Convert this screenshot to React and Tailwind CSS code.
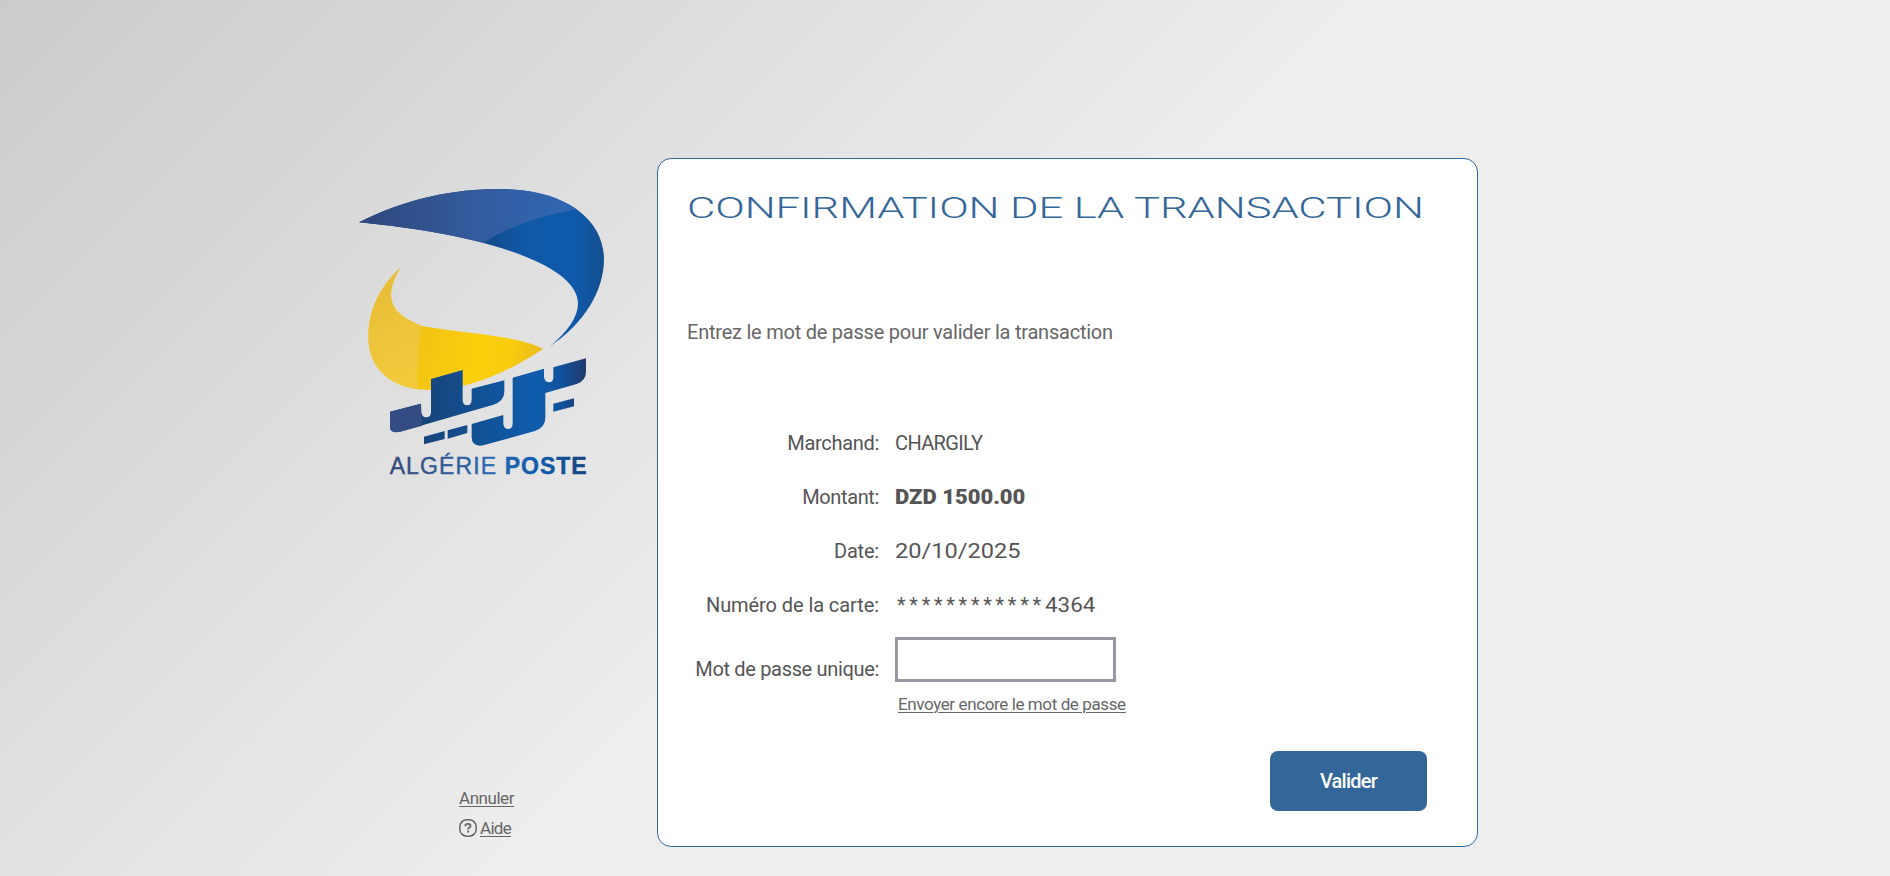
function Logo() {
  return (
    <svg viewBox="0 0 840 960" className="block h-[320px] w-[280px]" role="img">
      <defs>
        <linearGradient id="swoosh" gradientUnits="userSpaceOnUse" x1="432" y1="0" x2="792" y2="0">
          <stop offset="0" stopColor="#124a87" />
          <stop offset="0.35" stopColor="#0f59a8" />
          <stop offset="0.75" stopColor="#0f5aaa" />
          <stop offset="1" stopColor="#134f90" />
        </linearGradient>
        <linearGradient id="swooshLight" gradientUnits="userSpaceOnUse" x1="57" y1="0" x2="712" y2="0">
          <stop offset="0" stopColor="#2f477c" />
          <stop offset="0.5" stopColor="#335a9b" />
          <stop offset="1" stopColor="#2f67b4" />
        </linearGradient>
        <linearGradient id="yellow" gradientUnits="userSpaceOnUse" x1="240" y1="500" x2="600" y2="600">
          <stop offset="0" stopColor="#f2c314" />
          <stop offset="0.5" stopColor="#fbd00b" />
          <stop offset="0.72" stopColor="#f9cd0e" />
          <stop offset="1" stopColor="#e9b81e" />
        </linearGradient>
        <linearGradient id="yellowLight" gradientUnits="userSpaceOnUse" x1="90" y1="300" x2="240" y2="600">
          <stop offset="0" stopColor="#e7bb35" />
          <stop offset="1" stopColor="#f2ca3c" />
        </linearGradient>
        <linearGradient id="script" gradientUnits="userSpaceOnUse" x1="245" y1="0" x2="738" y2="0">
          <stop offset="0" stopColor="#184479" />
          <stop offset="0.5" stopColor="#0f569f" />
          <stop offset="0.7" stopColor="#0f5cad" />
          <stop offset="0.85" stopColor="#11529c" />
          <stop offset="1" stopColor="#203a6c" />
        </linearGradient>
        <linearGradient id="wordmark" gradientUnits="userSpaceOnUse" x1="150" y1="0" x2="740" y2="0">
          <stop offset="0" stopColor="#33487a" />
          <stop offset="0.5" stopColor="#2b68b0" />
          <stop offset="0.75" stopColor="#0f5cad" />
          <stop offset="1" stopColor="#17457e" />
        </linearGradient>
        <clipPath id="swooshClip">
          <path d="M57 157C200 85 340 57 480 57C680 57 792 150 792 268C792 360 735 460 628 530C685 485 714 440 714 400C714 290 455 195 57 157Z" />
        </clipPath>
        <clipPath id="yellowClip">
          <path d="M182 292C120 350 85 420 85 500C85 600 160 660 272 660C380 660 500 610 609 537C530 495 400 495 245 468C190 445 153 420 153 375C153 345 168 315 182 292Z" />
        </clipPath>
      </defs>
      <g clipPath="url(#swooshClip)">
        <path d="M0 0H840V560H0Z" fill="url(#swoosh)" />
        <path d="M0 0H840V100L712 118Q550 145 432 217L400 260H0Z" fill="url(#swooshLight)" />
      </g>
      <g clipPath="url(#yellowClip)">
        <path d="M0 240H700V700H0Z" fill="url(#yellow)" />
        <path d="M0 240H245V468Q228 560 235 700H0Z" fill="url(#yellowLight)" />
      </g>
      <g transform="translate(0 480)" fill="url(#script)">
        <path d="M150 245L243 221V245Q246 262 258 262Q273 262 273 245V147L368 120V210Q368 226 382 226Q395 226 395 208V176L493 151V185Q493 213 460 224L180 305Q150 311 150 292Z" />
        <path d="M150 245L243 221L246 287L180 305Q150 311 150 292Z" fill="#334c84" />
        <path d="M395 282L490 255V282Q492 297 505 297Q518 297 518 280V143L612 116V140Q614 157 628 157Q640 157 640 142V112L738 85V125Q738 152 710 162L616 189V265Q616 292 585 303L430 346Q395 352 395 322Z" />
        <path d="M252 320L314 303V327L252 343ZM323 301L382 285V309L323 326ZM640 221L702 205V229L640 245Z" />
      </g>
      <g fill="url(#wordmark)" stroke="url(#wordmark)" strokeWidth="1.2" fontSize="69" fontFamily="'Liberation Sans', Arial, sans-serif">
        <text x="149" y="911" textLength="319">ALGÉRIE</text>
        <text x="494" y="911" textLength="246" fontWeight="700">POSTE</text>
      </g>
    </svg>
  );
}

function HelpIcon() {
  return (
    <svg viewBox="0 0 18 18" className="h-[18px] w-[18px]" fill="none" stroke="#666">
      <rect x="0.8" y="0.8" width="16.4" height="16.4" rx="7" strokeWidth="1.5" />
      <path d="M6.4 7.2V6.7Q6.4 4.9 8.9 4.9Q11.5 4.9 11.5 6.9Q11.5 8.1 10.2 8.6Q9.1 9 9.1 10.4" strokeWidth="1.9" />
      <path d="M8.1 12.6H10.1" strokeWidth="1.9" />
    </svg>
  );
}

function Row({ label, labelClass, children }) {
  return (
    <div className="flex h-[54px] items-center">
      <div className="w-[193px] text-right">
        <span className={labelClass}>{label}</span>
      </div>
      <div className="ml-[16px] flex">{children}</div>
    </div>
  );
}

const linkClass = 'text-[17px] leading-5 text-[#666] underline decoration-1 underline-offset-[1.5px]';

export default function App() {
  return (
    <div className="h-[876px] overflow-hidden bg-[linear-gradient(135deg,#cbcbcb_0%,#eeeeee_50%)] font-['Roboto',sans-serif] text-[20px] leading-6 text-[#555]">
      <main className="flex pt-[158px]">
        <aside className="ml-[340px] flex h-[689px] w-[317px] flex-col pt-[12px]">
          <Logo />
          <nav className="mt-[298px] ml-[119px] flex flex-col items-start gap-[10px]">
            <a href="#annuler" className={linkClass + ' tracking-[-0.45px]'}>Annuler</a>
            <div className="flex items-center gap-[3px]">
              <HelpIcon />
              <a href="#aide" className={linkClass + ' tracking-[-0.7px]'}>Aide</a>
            </div>
          </nav>
        </aside>

        <section className="h-[689px] w-[821px] rounded-[14px] border border-[#336699] bg-white pl-[28px]">
          <h1 className="mt-[31px] ml-[1px] h-9 w-[509px] origin-left scale-x-[1.453] text-[30px] leading-9 font-[350] whitespace-nowrap text-[#336699] tracking-[-0.05px]">
            CONFIRMATION DE LA TRANSACTION
          </h1>
          <p className="mt-[94px] ml-[1px] tracking-[-0.23px] text-[#666]">
            Entrez le mot de passe pour valider la transaction
          </p>

          <div className="mt-[72px]">
            <Row label="Marchand:" labelClass="tracking-[-0.3px]">
              <span className="tracking-[-0.63px]">CHARGILY</span>
            </Row>
            <Row label="Montant:" labelClass="tracking-[-0.37px]">
              <span className="inline-block origin-left scale-x-[1.1] font-black">DZD 1500.00</span>
            </Row>
            <Row label="Date:" labelClass="tracking-[-0.2px]">
              <span className="inline-block origin-left scale-x-[1.18]">20/10/2025</span>
            </Row>
            <Row label="Numéro de la carte:" labelClass="tracking-[-0.08px]">
              <span className="ml-[2px] tracking-[3.7px]">************</span>
              <span className="inline-block origin-left scale-x-[1.12]">4364</span>
            </Row>
          </div>

          <div className="flex pt-[5px]">
            <label htmlFor="otp" className="mt-5 w-[193px] text-right tracking-[-0.33px]">
              Mot de passe unique:
            </label>
            <input id="otp" type="text" className="ml-4 h-[45px] w-[221px] border-[3px] border-[#9997a3] bg-white outline-none" />
          </div>
          <div className="mt-[12px] ml-[212px] flex">
            <a href="#renvoyer" className={linkClass + ' tracking-[-0.39px]'}>Envoyer encore le mot de passe</a>
          </div>

          <div className="mt-[37px] flex justify-end pr-[50px]">
            <button className="h-[60px] w-[157px] rounded-[8px] bg-[#336699] pb-px font-medium tracking-[-0.75px] text-white">
              Valider
            </button>
          </div>
        </section>
      </main>
    </div>
  );
}
